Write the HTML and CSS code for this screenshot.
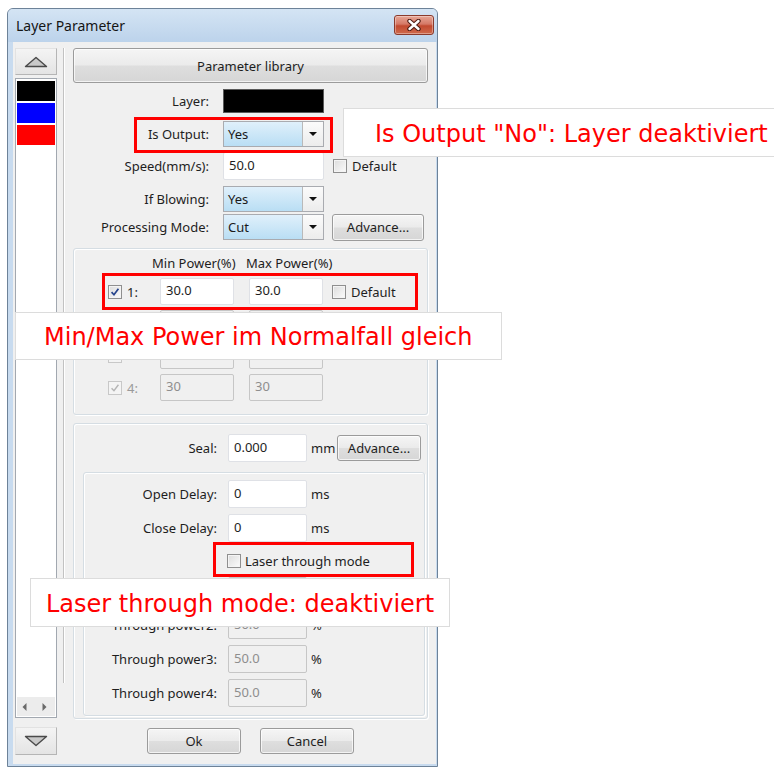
FILE: index.html
```html
<!DOCTYPE html>
<html lang="de">
<head>
<meta charset="utf-8">
<title>Layer Parameter</title>
<link rel="stylesheet" href="styles.css">
</head>
<body>
<div class="stage">
  <div class="window">
    <div class="titlebar">
      <span class="title">Layer Parameter</span>
      <button class="close-btn" aria-label="Close">
        <svg width="20" height="12" viewBox="0 0 20 12">
          <path d="M5.5 2 L14.5 10 M14.5 2 L5.5 10" stroke="#4b1a12" stroke-width="4.4" stroke-linecap="round"/>
          <path d="M5.5 2 L14.5 10 M14.5 2 L5.5 10" stroke="#ffffff" stroke-width="2.4" stroke-linecap="round"/>
        </svg>
      </button>
    </div>

    <div class="client">
      <aside class="sidebar">
        <button class="nav-btn" aria-label="Up">
          <svg width="24" height="12" viewBox="0 0 24 12"><path d="M1.5 10.5 L12 1.5 L22.5 10.5 Z" fill="#c9c9c9" stroke="#4a4a4a" stroke-width="1.4" stroke-linejoin="round"/></svg>
        </button>
        <div class="layer-list">
          <div class="swatches">
            <div class="swatch swatch-black"></div>
            <div class="swatch swatch-blue"></div>
            <div class="swatch swatch-red"></div>
          </div>
          <div class="hscroll">
            <svg width="5" height="8" viewBox="0 0 5 8"><path d="M4.5 0 L0.5 4 L4.5 8 Z" fill="#6a6a6a"/></svg>
            <svg width="5" height="8" viewBox="0 0 5 8"><path d="M0.5 0 L4.5 4 L0.5 8 Z" fill="#6a6a6a"/></svg>
          </div>
        </div>
        <button class="nav-btn nav-down" aria-label="Down">
          <svg width="24" height="12" viewBox="0 0 24 12"><path d="M1.5 1.5 L12 10.5 L22.5 1.5 Z" fill="#c9c9c9" stroke="#4a4a4a" stroke-width="1.4" stroke-linejoin="round"/></svg>
        </button>
      </aside>

      <div class="splitter"></div>

      <main class="panel">
        <button class="btn btn-library">Parameter library</button>

        <div class="row row-layer">
          <span class="lbl">Layer:</span>
          <div class="layer-color"></div>
        </div>

        <div class="row row-output">
          <span class="lbl">Is Output:</span>
          <div class="combo">
            <span class="combo-value">Yes</span>
            <span class="combo-arrow"><svg width="8" height="4" viewBox="0 0 8 4"><path d="M0 0 H8 L4 4 Z" fill="#111"/></svg></span>
          </div>
        </div>

        <div class="row row-speed">
          <span class="lbl">Speed(mm/s):</span>
          <div class="field field-wide">50.0</div>
          <span class="check check-after"></span>
          <span class="check-text">Default</span>
        </div>

        <div class="row row-blow">
          <span class="lbl">If Blowing:</span>
          <div class="combo">
            <span class="combo-value">Yes</span>
            <span class="combo-arrow"><svg width="8" height="4" viewBox="0 0 8 4"><path d="M0 0 H8 L4 4 Z" fill="#111"/></svg></span>
          </div>
        </div>

        <div class="row row-mode">
          <span class="lbl">Processing Mode:</span>
          <div class="combo">
            <span class="combo-value">Cut</span>
            <span class="combo-arrow"><svg width="8" height="4" viewBox="0 0 8 4"><path d="M0 0 H8 L4 4 Z" fill="#111"/></svg></span>
          </div>
          <button class="btn btn-advance">Advance...</button>
        </div>

        <section class="group group-power">
          <div class="power-head">
            <span class="head-min">Min Power(%)</span>
            <span class="head-max">Max Power(%)</span>
          </div>
          <div class="power-row">
            <span class="check checked"><svg viewBox="0 0 14 14"><path d="M3 7.2 L5.8 10.2 L11 3.2" fill="none" stroke="#26448c" stroke-width="2"/></svg></span>
            <span class="num">1:</span>
            <div class="field field-power">30.0</div>
            <div class="field field-power field-gap">30.0</div>
            <span class="check check-after"></span>
            <span class="check-text">Default</span>
          </div>
          <!-- rows 2 and 3 sit under the power note; only their boxes peek out -->
          <div class="power-row is-disabled">
            <span class="check"></span>
            <span class="num"></span>
            <div class="field field-power"></div>
            <div class="field field-power field-gap"></div>
          </div>
          <div class="power-row is-disabled">
            <span class="check"></span>
            <span class="num"></span>
            <div class="field field-power"></div>
            <div class="field field-power field-gap"></div>
          </div>
          <div class="power-row is-disabled">
            <span class="check checked"><svg viewBox="0 0 14 14"><path d="M3 7.2 L5.8 10.2 L11 3.2" fill="none" stroke="#b4b4b4" stroke-width="1.6"/></svg></span>
            <span class="num">4:</span>
            <div class="field field-power">30</div>
            <div class="field field-power field-gap">30</div>
          </div>
        </section>

        <section class="group group-seal">
          <div class="row row-seal">
            <span class="lbl lbl-seal">Seal:</span>
            <div class="field field-short">0.000</div>
            <span class="unit unit-mm">mm</span>
            <button class="btn btn-advance-sm">Advance...</button>
          </div>

          <div class="group group-inner">
            <div class="row row-delay">
              <span class="lbl lbl-inner">Open Delay:</span>
              <div class="field field-short">0</div>
              <span class="unit">ms</span>
            </div>
            <div class="row row-delay row-close">
              <span class="lbl lbl-inner">Close Delay:</span>
              <div class="field field-short">0</div>
              <span class="unit">ms</span>
            </div>
            <div class="row row-through-mode">
              <span class="check"></span>
              <span class="check-text">Laser through mode</span>
            </div>
            <!-- first power row is covered by the through-mode note -->
            <div class="row row-tp row-tp-first">
              <span class="lbl lbl-inner"></span>
              <div class="field field-short field-disabled"></div>
            </div>
            <div class="row row-tp">
              <span class="lbl lbl-inner">Through power2:</span>
              <div class="field field-short field-disabled">50.0</div>
              <span class="unit">%</span>
            </div>
            <div class="row row-tp">
              <span class="lbl lbl-inner">Through power3:</span>
              <div class="field field-short field-disabled">50.0</div>
              <span class="unit">%</span>
            </div>
            <div class="row row-tp">
              <span class="lbl lbl-inner">Through power4:</span>
              <div class="field field-short field-disabled">50.0</div>
              <span class="unit">%</span>
            </div>
          </div>
        </section>

        <div class="actions">
          <button class="btn btn-action">Ok</button>
          <button class="btn btn-action">Cancel</button>
        </div>
      </main>
    </div>
  </div>

  <div class="mark mark-output"></div>
  <div class="mark mark-power"></div>
  <div class="mark mark-through"></div>

  <div class="note note-output">Is Output "No": Layer deaktiviert</div>
  <div class="note note-power">Min/Max Power im Normalfall gleich</div>
  <div class="note note-through">Laser through mode: deaktiviert</div>
</div>
</body>
</html>
```

FILE: styles.css
```css
* { box-sizing: border-box; }

html, body {
  margin: 0;
  padding: 0;
  background: #ffffff;
}

body {
  font-family: "Noto Sans", "DejaVu Sans", sans-serif;
  font-size: 13px;
  color: #1e1e1e;
}

button {
  font: inherit;
  color: inherit;
  padding: 0;
  cursor: default;
}

.stage {
  position: relative;
  width: 774px;
  height: 770px;
  overflow: hidden;
}

/* ---------- dialog frame ---------- */
.window {
  margin: 8px 0 0 7px;
  width: 431px;
  height: 759px;
  border: 1px solid #6d8298;
  border-radius: 6px 6px 0 0;
  background: #c8dbef;
  display: flex;
  flex-direction: column;
}

.titlebar {
  height: 33px;
  display: flex;
  align-items: flex-start;
  justify-content: space-between;
  padding: 0 3px 0 8px;
  background: linear-gradient(#d4e4f4, #bcd3eb);
  border-radius: 5px 5px 0 0;
}

.title {
  line-height: 33px;
  font-size: 14px;
  color: #151515;
}

.close-btn {
  margin-top: 6px;
  width: 40px;
  height: 20px;
  border: 1px solid #8a3a2c;
  border-radius: 3px;
  background: linear-gradient(#e7a796, #d57866 45%, #c2492f 55%, #cf6a4c);
  box-shadow: inset 0 0 0 1px rgba(255, 255, 255, 0.35);
  display: flex;
  align-items: center;
  justify-content: center;
}

.client {
  flex: 1;
  margin: 0 1px 2px 5px;
  background: #f0f0f0;
  display: flex;
  padding-top: 6px;
}

/* ---------- layer list column ---------- */
.sidebar {
  width: 42px;
  margin-left: 2px;
  display: flex;
  flex-direction: column;
}

.nav-btn {
  height: 27px;
  border: 1px solid #b5b5b5;
  border-top-color: #e2e2e2;
  border-left-color: #e2e2e2;
  background: linear-gradient(#f4f4f4, #e4e4e4);
  display: flex;
  align-items: center;
  justify-content: center;
}

.nav-down {
  height: 28px;
  margin-top: 9px;
}

.layer-list {
  margin-top: 3px;
  height: 640px;
  border: 1px solid #a2a8b0;
  background: #ffffff;
  display: flex;
  flex-direction: column;
  padding: 2px 1px 1px;
}

.swatches {
  flex: 1;
  display: flex;
  flex-direction: column;
  gap: 2px;
}

.swatch { height: 20px; }
.swatch-black { background: #000000; }
.swatch-blue { background: #0000ff; }
.swatch-red { background: #ff0000; }

.hscroll {
  height: 19px;
  background: #ececec;
  display: flex;
  align-items: center;
  justify-content: center;
  gap: 15px;
  padding-right: 3px;
}

.splitter {
  margin-left: 6px;
  width: 2px;
  height: 635px;
  border-left: 1px solid #c2c2c2;
  border-right: 1px solid #ffffff;
}

/* ---------- parameter panel ---------- */
.panel {
  margin-left: 8px;
  width: 355px;
  display: flex;
  flex-direction: column;
}

.btn {
  border: 1px solid #9b9b9b;
  border-radius: 3px;
  background: linear-gradient(#f5f5f5, #ebebeb 48%, #dedede 52%, #d6d6d6);
  box-shadow: inset 0 0 0 1px rgba(255, 255, 255, 0.7);
  color: #1e1e1e;
}

.btn-library { height: 35px; }

.row {
  display: flex;
  align-items: center;
}

.lbl {
  width: 136px;
  margin-right: 14px;
  text-align: right;
  white-space: nowrap;
}

.row-layer { margin-top: 6px; height: 24px; }
.row-output { margin-top: 8px; height: 26px; }
.row-speed { margin-top: 5px; height: 28px; }
.row-blow { margin-top: 6px; height: 26px; }
.row-mode { margin-top: 2px; height: 26px; }

.layer-color {
  width: 101px;
  height: 24px;
  background: #000000;
  border: 1px solid #5a5a5a;
}

.combo {
  width: 101px;
  height: 26px;
  display: flex;
  border: 1px solid #a9abb0;
  background: #ffffff;
}

.combo-value {
  flex: 1;
  padding-left: 4px;
  line-height: 24px;
  background: linear-gradient(#e0f0fb, #b9def4);
  color: #1a1a1a;
}

.combo-arrow {
  width: 21px;
  border-left: 1px solid #b9b9b9;
  background: linear-gradient(#fbfbfb, #ececec);
  display: flex;
  align-items: center;
  justify-content: center;
}

.field {
  height: 28px;
  border: 1px solid #dfe1e6;
  border-radius: 2px;
  background: #ffffff;
  padding: 0 5px;
  line-height: 24px;
}

.field-wide { width: 101px; }
.field-short { width: 79px; }
.field-power { width: 74px; height: 27px; line-height: 23px; }
.field-gap { margin-left: 15px; }

.field-disabled,
.is-disabled .field {
  background: #f0f0f0;
  border-color: #c6c6c6;
  color: #8e8e8e;
}

.check {
  width: 14px;
  height: 14px;
  border: 1px solid #8f8f8f;
  background: linear-gradient(135deg, #dcdcdc, #fbfbfb);
  box-shadow: inset 0 0 0 1px #f4f4f4;
  display: inline-flex;
}

.check svg { width: 12px; height: 12px; }

.check-after { margin-left: 9px; }

.check-text { margin-left: 5px; white-space: nowrap; }

.btn-advance {
  margin-left: 8px;
  width: 92px;
  height: 27px;
}

/* ---------- group boxes ---------- */
.group {
  border: 1px solid #d5dde3;
  border-radius: 3px;
  box-shadow: inset 1px 1px 0 #ffffff, 1px 1px 0 #ffffff;
}

.group-power {
  margin-top: 8px;
  height: 167px;
  padding-top: 6px;
}

.power-head {
  display: flex;
  height: 16px;
  line-height: 16px;
  padding-left: 78px;
}

.head-min { width: 94px; }

.power-row {
  display: flex;
  align-items: center;
  height: 27px;
  margin-top: 5px;
  padding-left: 34px;
}

.power-head + .power-row { margin-top: 7px; }

.num {
  width: 33px;
  margin-left: 5px;
}

.is-disabled .num { color: #9a9a9a; }

.is-disabled .check {
  border-color: #c8c8c8;
  background: #f4f4f4;
  box-shadow: none;
}

.group-seal {
  margin-top: 8px;
  height: 296px;
  padding-top: 10px;
}

.row-seal { height: 28px; }

.lbl-seal {
  width: 143px;
  margin-right: 11px;
}

.unit {
  margin-left: 4px;
  white-space: nowrap;
}

.unit-mm { width: 26px; }

.btn-advance-sm {
  width: 84px;
  height: 26px;
}

.group-inner {
  margin: 10px 2px 0 9px;
  height: 244px;
  padding-top: 7px;
}

.lbl-inner {
  width: 133px;
  margin-right: 11px;
}

.row-delay { height: 28px; }
.row-close { margin-top: 6px; }

.row-through-mode {
  height: 27px;
  margin-top: 5px;
  padding-left: 143px;
}

.row-through-mode .check-text { margin-left: 4px; }

.row-tp { height: 28px; margin-top: 6px; }
.row-tp-first { margin-top: 3px; }

/* ---------- dialog buttons ---------- */
.actions {
  margin-top: 9px;
  display: flex;
  justify-content: center;
  gap: 19px;
}

.btn-action {
  width: 94px;
  height: 26px;
}

/* ---------- annotation layer ---------- */
.mark {
  position: absolute;
  border: 3px solid #ff0000;
}

.mark-output { left: 134px; top: 117px; width: 199px; height: 36px; }
.mark-power { left: 102px; top: 273px; width: 316px; height: 37px; }
.mark-through { left: 213px; top: 542px; width: 201px; height: 35px; }

.note {
  position: absolute;
  background: #ffffff;
  border: 1px solid #dcdcdc;
  font-family: "DejaVu Sans", sans-serif;
  font-size: 24px;
  color: #ff0000;
  white-space: nowrap;
  padding-top: 3px;
}

.note-output {
  left: 343px;
  top: 108px;
  width: 440px;
  height: 49px;
  line-height: 44px;
  padding-left: 31px;
}

.note-power {
  left: 15px;
  top: 312px;
  width: 487px;
  height: 48px;
  line-height: 43px;
  padding-left: 28px;
}

.note-through {
  left: 30px;
  top: 578px;
  width: 420px;
  height: 49px;
  line-height: 44px;
  padding-left: 15px;
}
```
